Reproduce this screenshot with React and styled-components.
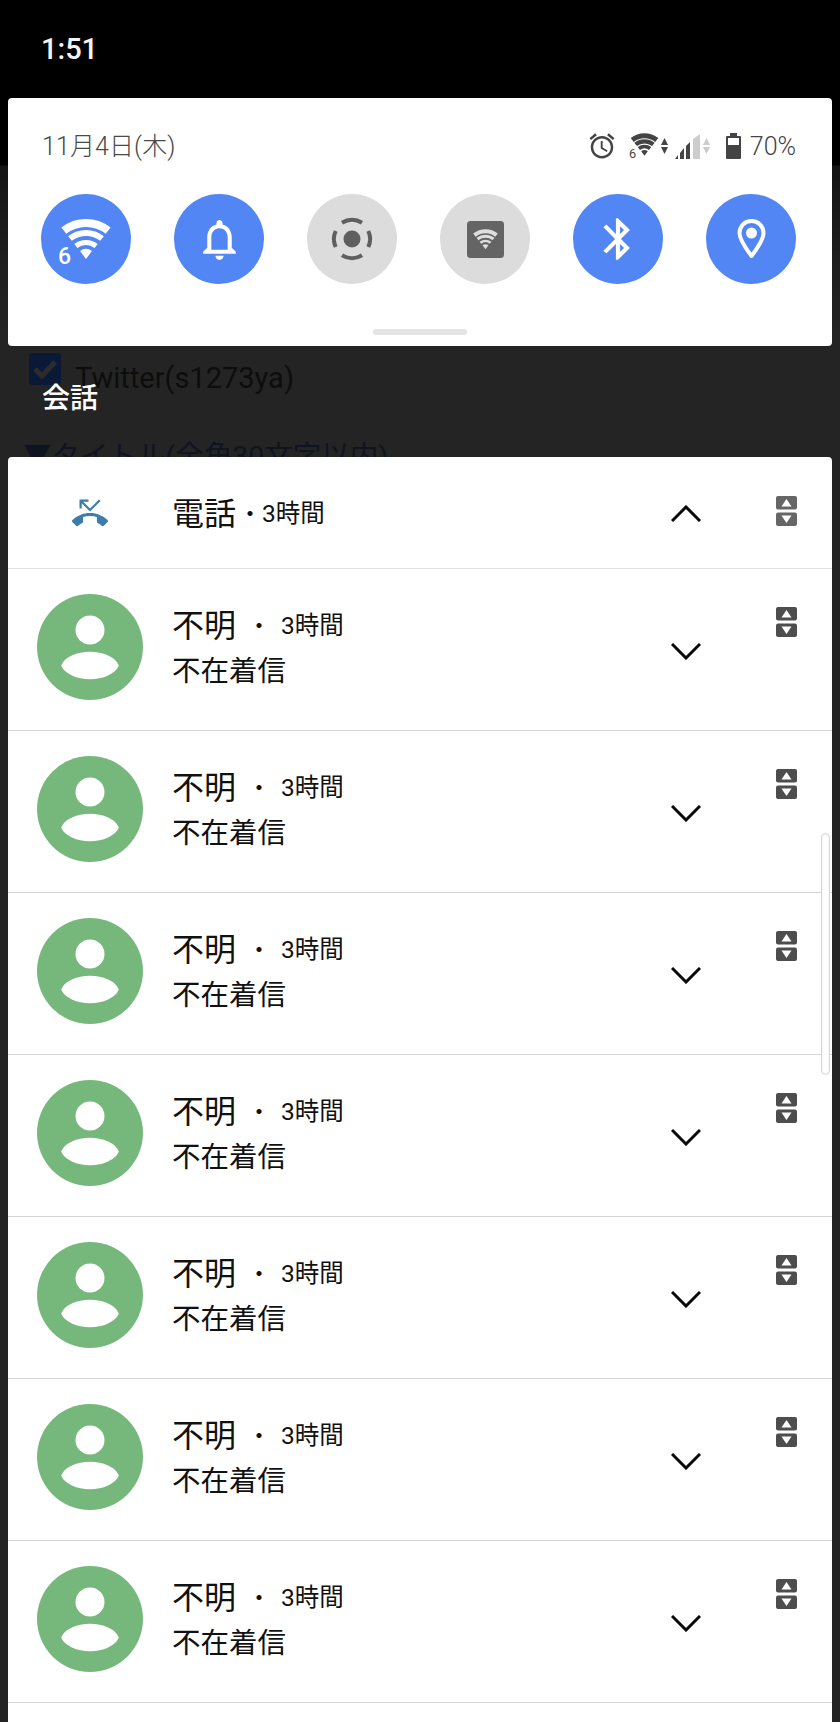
import React from 'react';
import styled, { createGlobalStyle } from 'styled-components';

const Global = createGlobalStyle`
  html, body { margin: 0; padding: 0; background: #000; }
  * { box-sizing: border-box; }
`;

const Screen = styled.div`
  width: 840px;
  height: 1722px;
  overflow: hidden;
  display: flex;
  flex-direction: column;
  font-family: Roboto, "Noto Sans CJK JP", sans-serif;
  background: linear-gradient(to bottom, #000 0, #000 165px, #141414 166px, #1f1f1f 260px, #242424 346px, #242424 100%);
`;

const StatusBar = styled.div`
  height: 98px;
  flex: none;
  display: flex;
  align-items: center;
  padding: 0 0 0 41px;
  color: #f4f4f4;
  font-size: 29px;
  font-weight: 500;
`;

const QuickPanel = styled.section`
  flex: none;
  height: 248px;
  margin: 0 8px;
  background: #fff;
  border-radius: 4px;
  display: flex;
  flex-direction: column;
`;

const PanelHead = styled.div`
  height: 96px;
  display: flex;
  align-items: center;
  justify-content: space-between;
  padding: 0 36px 0 34px;
`;

const DateText = styled.div`
  font-size: 25px;
  color: #4a4a4a;
  font-weight: 300;
  margin-bottom: 5px;
  letter-spacing: 0.1px;
`;

const StatusIcons = styled.div`
  display: flex;
  align-items: center;
`;

const IconGap = styled.span`
  width: ${(p) => p.$w}px;
  flex: none;
`;

const BatteryText = styled.span`
  font-size: 25px;
  font-weight: 300;
  color: #444;
  margin-left: 9px;
`;

const Tiles = styled.div`
  display: flex;
  gap: 43px;
  padding-left: 33px;
`;

const Tile = styled.div`
  width: 90px;
  height: 90px;
  border-radius: 50%;
  display: flex;
  align-items: center;
  justify-content: center;
  background: ${(p) => (p.$on ? '#5286f4' : '#dcdcdc')};
`;

const Handle = styled.div`
  width: 94px;
  height: 6px;
  margin: 45px auto 0;
  border-radius: 3px;
  background: #e4e4e4;
`;

const Backdrop = styled.div`
  flex: none;
  height: 111px;
  position: relative;
  overflow: hidden;
  padding: 7px 0 0 29px;
`;

const CheckRow = styled.div`
  display: flex;
  align-items: center;
  gap: 14px;
  height: 32px;
`;

const CheckLabel = styled.span`
  color: #0d0d0d;
  font-size: 29px;
  line-height: 40px;
  margin-top: 18px;
`;

const CheckBox = styled.div`
  width: 32px;
  height: 32px;
  border-radius: 3px;
  background: #0a1a36;
  display: flex;
  align-items: center;
  justify-content: center;
  flex: none;
`;

const BackdropTitle = styled.div`
  margin: 52px 0 0 -6px;
  font-size: 28.5px;
  line-height: 40px;
  color: #0f1420;
  white-space: nowrap;
`;

const SectionLabel = styled.div`
  position: absolute;
  left: 42px;
  top: 33px;
  font-size: 28px;
  line-height: 40px;
  color: #fff;
  font-weight: 500;
`;

const NotifPanel = styled.section`
  flex: 1;
  margin: 0 8px;
  background: #fff;
  border-radius: 4px 4px 0 0;
  position: relative;
  overflow: hidden;
`;

const Row = styled.div`
  height: ${(p) => (p.$header ? '112px' : '162px')};
  display: flex;
  align-items: center;
  border-bottom: 1.5px solid ${(p) => (p.$header ? '#e2e2e2' : '#d4d4d4')};
`;

const Lead = styled.div`
  width: 106px;
  margin: ${(p) => (p.$header ? '0 29px 0 29px' : '-6px 29px 0 29px')};
  display: flex;
  justify-content: center;
  flex: none;
`;

const Body = styled.div`
  flex: 1;
  align-self: ${(p) => (p.$header ? 'center' : 'flex-start')};
  padding-top: ${(p) => (p.$header ? '3px' : '37px')};
  color: #111;
`;

const TitleLine = styled.div`
  display: flex;
  align-items: center;
  height: 40px;
  font-size: 32px;
  line-height: 40px;
`;

const Separator = styled.span`
  font-size: 24px;
  margin: ${(p) => (p.$header ? '0 0 0 2px' : '0 10px 0 11px')};
`;

const Time = styled.span`
  font-size: 24.5px;
`;

const SubLine = styled.div`
  margin-top: 6px;
  font-size: 28.5px;
  line-height: 40px;
`;

const ChevronCell = styled.div`
  width: 30px;
  height: 17px;
  flex: none;
  margin: ${(p) => (p.$header ? '2px 75px 0 0' : '3px 75px 0 0')};
  display: flex;
`;

const SwapCell = styled.div`
  width: 21px;
  flex: none;
  margin: 0 35px 0 0;
  align-self: flex-start;
  padding-top: ${(p) => (p.$header ? '39px' : '38px')};
`;

const Scroller = styled.div`
  position: absolute;
  right: 2px;
  top: 376px;
  width: 9px;
  height: 242px;
  border-radius: 5px;
  border: 1px solid #d6d6d6;
  box-shadow: inset 0 0 0 1px #f8f8f8;
  background: #fff;
`;

const band = (r, a = 38) => {
  const t = (a * Math.PI) / 180;
  const x = (r * Math.sin(t)).toFixed(2);
  const y = (-r * Math.cos(t)).toFixed(2);
  return `M-${x} ${y}A${r} ${r} 0 0 1 ${x} ${y}`;
};

const Wifi = ({ width, color, lift = 0, heavy = false }) => (
  <svg
    width={width}
    viewBox="-28 -41 56 47"
    style={lift ? { marginTop: lift } : undefined}
    fill="none"
    stroke={color}
  >
    <path d={band(36)} strokeWidth={heavy ? 9 : 8} />
    <path d={band(26)} strokeWidth={heavy ? 7.5 : 6} />
    <path d={band(16.5)} strokeWidth={heavy ? 6.5 : 5} />
    <path d="M-6 -8A10 10 0 0 1 6 -8L0 0Z" fill={color} stroke="none" />
    <text x="-28" y="4.5" fontFamily="Roboto, sans-serif" fontSize="23" fontWeight={heavy ? 400 : 500} fill={color} stroke="none">6</text>
  </svg>
);

const Mat = ({ size, color, d }) => (
  <svg width={size} height={size} viewBox="0 0 24 24" fill={color}>
    <path d={d} />
  </svg>
);

const BELL = 'M12 22c1.1 0 2-.9 2-2h-4c0 1.1.89 2 2 2zm6-6v-5c0-3.07-1.64-5.64-4.5-6.32V4c0-.83-.67-1.5-1.5-1.5s-1.5.67-1.5 1.5v.68C7.63 5.36 6 7.92 6 11v5l-2 2v1h16v-1l-2-2zm-2 1H8v-6c0-2.48 1.51-4.5 4-4.5s4 2.02 4 4.5v6z';
const BLUETOOTH = 'M17.71 7.71L12 2h-1v7.59L6.41 5 5 6.41 10.59 12 5 17.59 6.41 19 11 14.41V22h1l5.71-5.71-4.3-4.29 4.3-4.29zM13 5.83l1.88 1.88L13 9.59V5.83zm1.88 10.46L13 18.17v-3.76l1.88 1.88z';
const ALARM = 'M22 5.72l-4.6-3.86-1.29 1.53 4.6 3.86L22 5.72zM7.88 3.39L6.6 1.86 2 5.71l1.29 1.53 4.59-3.85zM12.5 8H11v6l4.75 2.85.75-1.23-4-2.37V8zM12 4c-4.97 0-9 4.03-9 9s4.03 9 9 9 9-4.03 9-9-4.03-9-9-9zm0 16c-3.87 0-7-3.13-7-7s3.13-7 7-7 7 3.13 7 7-3.13 7-7 7z';
const PHONE_MISSED = 'M6.5 5.5L12 11l7-7-1-1-6 6-4.5-4.5H11V3H5v6h1.5V5.5zm17.21 11.17C20.66 13.78 16.54 12 12 12 7.46 12 3.34 13.78.29 16.67c-.18.18-.29.43-.29.71s.11.53.29.71l2.48 2.48c.18.18.43.29.71.29.27 0 .52-.11.7-.28.79-.74 1.69-1.36 2.66-1.85.33-.16.56-.5.56-.9v-3.1c1.45-.48 3-.73 4.6-.73 1.6 0 3.15.25 4.6.72v3.1c0 .39.23.74.56.9.98.49 1.87 1.12 2.67 1.85.18.18.43.28.7.28.28 0 .53-.11.71-.29l2.48-2.48c.18-.18.29-.43.29-.71s-.12-.52-.3-.7z';

const RecordIcon = () => (
  <svg width="46" height="46" viewBox="-23 -23 46 46" fill="none" stroke="#5f5f5f" strokeWidth="4">
    <circle r="8.5" fill="#5f5f5f" stroke="none" />
    <path d="M-10 -16.3A19 19 0 0 1 10 -16.3" />
    <path d="M-10 16.3A19 19 0 0 0 10 16.3" />
    <path d="M-16.3 -8A19 19 0 0 0 -16.3 8" />
    <path d="M16.3 -8A19 19 0 0 1 16.3 8" />
  </svg>
);

const HotspotIcon = () => (
  <svg width="37" height="37" viewBox="0 0 37 37">
    <rect width="37" height="37" rx="3.5" fill="#646464" />
    <svg x="6" y="7.5" width="25" height="21" viewBox="-25 -41 50 41" fill="none" stroke="#dedede">
      <path d={band(36)} strokeWidth="8" />
      <path d={band(26)} strokeWidth="6" />
      <path d={band(16.5)} strokeWidth="5" />
      <path d="M-6 -8A10 10 0 0 1 6 -8L0 0Z" fill="#dedede" stroke="none" />
    </svg>
  </svg>
);

const PinIcon = () => (
  <svg width="29" height="40" viewBox="0 0 29 40" fill="none" stroke="#fff" strokeWidth="4">
    <path d="M14.5 2C7.5 2 2.5 7.5 2.5 14C2.5 21 10 31 14.5 37C19 31 26.5 21 26.5 14C26.5 7.5 21.5 2 14.5 2Z" strokeLinejoin="round" />
    <circle cx="14.5" cy="14" r="5.5" fill="#fff" stroke="none" />
  </svg>
);

const DataArrows = ({ color }) => (
  <svg width="7" height="16" viewBox="0 0 7 16" fill={color}>
    <path d="M3.5 0L7 7H0Z" />
    <path d="M3.5 16L7 9H0Z" />
  </svg>
);

const SignalIcon = () => (
  <svg width="26" height="25" viewBox="0 0 26 25">
    <path d="M0 25L3 21V25Z" fill="#444" />
    <path d="M5 19L9 14V25H5Z" fill="#444" />
    <path d="M11 12L15 8V25H11Z" fill="#444" />
    <path d="M18 5L25 0V25H18Z" fill="#ccc" />
  </svg>
);

const BatteryIcon = () => (
  <svg width="15" height="26" viewBox="0 0 15 26">
    <path d="M4 0H11V3H14Q15 3 15 4V25Q15 26 14 26H1Q0 26 0 25V4Q0 3 1 3H4Z" fill="#444" />
    <rect x="2" y="5" width="11" height="7" fill="#fff" />
  </svg>
);

const Avatar = () => (
  <svg width="106" height="106" viewBox="0 0 106 106">
    <circle cx="53" cy="53" r="53" fill="#76b87c" />
    <circle cx="53" cy="36" r="14.5" fill="#fff" />
    <path d="M25 71.5C28 64 40 58.5 53 58.5C66 58.5 78 64 81 71.5C78 79 66 84.5 53 84.5C40 84.5 28 79 25 71.5Z" fill="#fff" stroke="#fff" strokeWidth="1.5" strokeLinejoin="round" />
  </svg>
);

const Chevron = ({ up }) => (
  <svg width="30" height="17" viewBox="0 0 30 17" fill="none" stroke="#0a0a0a" strokeWidth="3">
    <path d={up ? 'M1 16L15 2L29 16' : 'M1 1L15 15L29 1'} />
  </svg>
);

const SwapIcon = ({ color }) => (
  <svg width="21" height="30" viewBox="0 0 21 30" style={{ display: 'block' }}>
    <rect width="21" height="13.5" rx="2" fill={color} />
    <rect y="16.5" width="21" height="13.5" rx="2" fill={color} />
    <path d="M10.5 3L15.5 10.5H5.5Z" fill="#fff" />
    <path d="M10.5 27L15.5 19.5H5.5Z" fill="#fff" />
  </svg>
);

const MissedRow = () => (
  <Row>
    <Lead><Avatar /></Lead>
    <Body>
      <TitleLine>
        不明
        <Separator>・</Separator>
        <Time>3時間</Time>
      </TitleLine>
      <SubLine>不在着信</SubLine>
    </Body>
    <ChevronCell><Chevron /></ChevronCell>
    <SwapCell><SwapIcon color="#4d4d4d" /></SwapCell>
  </Row>
);

export default function App() {
  return (
    <Screen>
      <Global />
      <StatusBar>1:51</StatusBar>
      <QuickPanel>
        <PanelHead>
          <DateText>11月4日(木)</DateText>
          <StatusIcons>
            <Mat size={30} color="#444" d={ALARM} />
            <IconGap $w={12} />
            <Wifi width={31} color="#444" heavy />
            <IconGap $w={1} />
            <DataArrows color="#444" />
            <IconGap $w={7} />
            <SignalIcon />
            <IconGap $w={2} />
            <DataArrows color="#ccc" />
            <IconGap $w={16} />
            <BatteryIcon />
            <BatteryText>70%</BatteryText>
          </StatusIcons>
        </PanelHead>
        <Tiles>
          <Tile $on><Wifi width={56} color="#fff" lift={5} /></Tile>
          <Tile $on><Mat size={49} color="#fff" d={BELL} /></Tile>
          <Tile><RecordIcon /></Tile>
          <Tile><HotspotIcon /></Tile>
          <Tile $on><Mat size={50} color="#fff" d={BLUETOOTH} /></Tile>
          <Tile $on><PinIcon /></Tile>
        </Tiles>
        <Handle />
      </QuickPanel>
      <Backdrop>
        <CheckRow>
          <CheckBox>
            <svg width="24" height="20" viewBox="0 0 24 20" fill="none" stroke="#2c2c2c" strokeWidth="5">
              <path d="M2 10L9 17L22 3" />
            </svg>
          </CheckBox>
          <CheckLabel>Twitter(s1273ya)</CheckLabel>
        </CheckRow>
        <BackdropTitle>▼タイトル(全角30文字以内)</BackdropTitle>
        <SectionLabel>会話</SectionLabel>
      </Backdrop>
      <NotifPanel>
        <Row $header>
          <Lead $header><Mat size={36} color="#3d7cab" d={PHONE_MISSED} /></Lead>
          <Body $header>
            <TitleLine>
              電話
              <Separator $header>・</Separator>
              <Time>3時間</Time>
            </TitleLine>
          </Body>
          <ChevronCell $header><Chevron up /></ChevronCell>
          <SwapCell $header><SwapIcon color="#666" /></SwapCell>
        </Row>
        {Array.from({ length: 7 }, (_, i) => <MissedRow key={i} />)}
        <Scroller />
      </NotifPanel>
    </Screen>
  );
}
